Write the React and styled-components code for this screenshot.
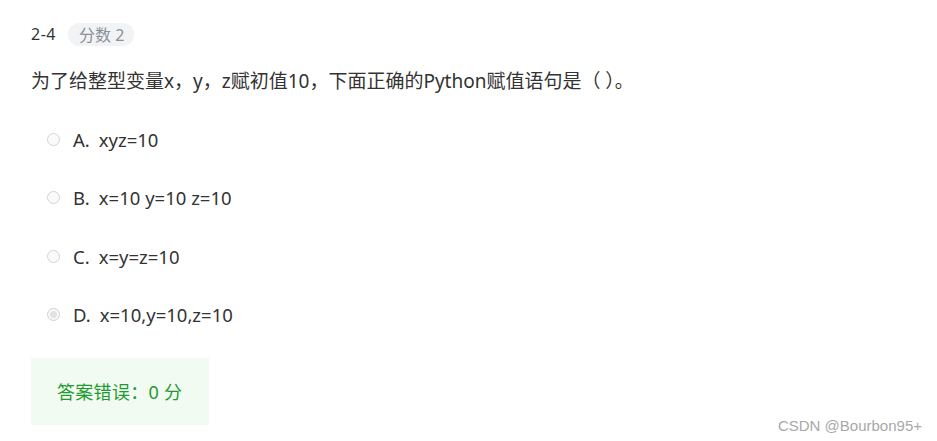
import React from "react";
import styled, { createGlobalStyle } from "styled-components";

const Global = createGlobalStyle`
  html, body { margin: 0; padding: 0; background: #fff; }
  body { font-family: "Noto Sans", "Noto Sans CJK SC", sans-serif; color: #333; }
`;

const Page = styled.div`
  position: relative;
  width: 937px;
  height: 441px;
  box-sizing: border-box;
  padding: 21px 0 0 31px;
  overflow: hidden;
`;

const Header = styled.div`
  display: flex;
  align-items: center;
  gap: 12px;
  height: 26px;
`;

const Num = styled.span`
  font-size: 16px;
  letter-spacing: 0.5px;
  color: #333;
`;

const Badge = styled.span`
  display: inline-flex;
  align-items: center;
  height: 23px;
  padding: 0 10px 0 11px;
  border-radius: 12px;
  background: #f2f3f5;
  color: #8a9099;
  font-size: 16px;
`;

const Question = styled.div`
  margin-top: 20px;
  font-size: 19px;
  line-height: 28px;
  color: #333;
`;

const Options = styled.div`
  display: flex;
  flex-direction: column;
  gap: 30.5px;
  margin-top: 30px;
  padding-left: 16px;
`;

const Option = styled.label`
  display: flex;
  align-items: center;
  height: 28px;
  font-size: 18.5px;
  color: #333;
`;

const Radio = styled.span`
  width: 13px;
  height: 13px;
  box-sizing: border-box;
  border-radius: 50%;
  border: 1px solid #d4d4d4;
  background: ${(p) => (p.$checked ? "#e2e2e2" : "#fafafa")};
  box-shadow: ${(p) => (p.$checked ? "inset 0 0 0 2px #fafafa" : "none")};
  margin-right: 13px;
  flex-shrink: 0;
`;

const Letter = styled.span`
  margin-right: 9px;
`;

const Result = styled.div`
  margin-top: 29px;
  width: 178px;
  height: 67px;
  box-sizing: border-box;
  padding-left: 26px;
  display: flex;
  align-items: center;
  background: #f2fbf2;
  color: #1f9a31;
  font-size: 18px;
  letter-spacing: 0.3px;
`;

const Watermark = styled.div`
  position: absolute;
  right: 15px;
  bottom: 7px;
  font-family: "Liberation Sans", "Noto Sans CJK SC", sans-serif;
  font-size: 15px;
  color: #a8a8a8;
`;

const options = [
  { l: "A.", t: "xyz=10" },
  { l: "B.", t: "x=10 y=10 z=10" },
  { l: "C.", t: "x=y=z=10" },
  { l: "D.", t: "x=10,y=10,z=10", checked: true },
];

export default function App() {
  return (
    <>
      <Global />
      <Page>
        <Header>
          <Num>2-4</Num>
          <Badge>分数 2</Badge>
        </Header>
        <Question>为了给整型变量x，y，z赋初值10，下面正确的Python赋值语句是（ ）。</Question>
        <Options>
          {options.map((o) => (
            <Option key={o.l}>
              <Radio $checked={o.checked} />
              <Letter>{o.l}</Letter>
              {o.t}
            </Option>
          ))}
        </Options>
        <Result>答案错误：0 分</Result>
        <Watermark>CSDN @Bourbon95+</Watermark>
      </Page>
    </>
  );
}
